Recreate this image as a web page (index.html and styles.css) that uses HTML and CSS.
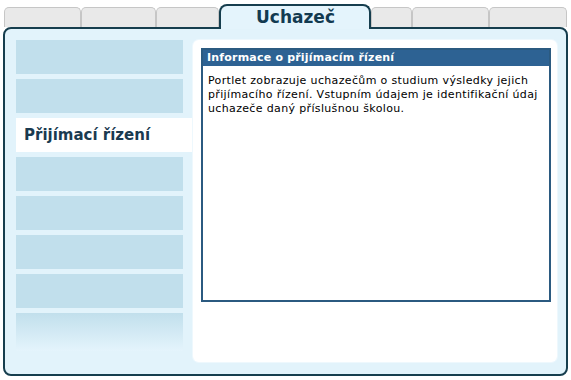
FILE: index.html
```html
<!DOCTYPE html>
<html lang="cs">
<head>
<meta charset="utf-8">
<title>Uchazeč</title>
<link rel="stylesheet" href="styles.css">
</head>
<body>
<div class="page">
  <div class="tabs">
    <div class="tab w1"></div>
    <div class="tab w2"></div>
    <div class="tab w3"></div>
    <div class="tab active">Uchazeč</div>
    <div class="tab w5"></div>
    <div class="tab w6"></div>
    <div class="tab w7"></div>
  </div>
  <div class="panel">
    <div class="menu">
      <div class="item"></div>
      <div class="item"></div>
      <div class="item current">Přijímací řízení</div>
      <div class="item"></div>
      <div class="item"></div>
      <div class="item"></div>
      <div class="item"></div>
      <div class="item last"></div>
    </div>
    <div class="content">
      <div class="portlet">
        <div class="portlet-head">Informace o přijímacím řízení</div>
        <div class="portlet-body">Portlet zobrazuje uchazečům o studium výsledky jejich přijímacího řízení. Vstupním údajem je identifikační údaj uchazeče daný příslušnou školou.</div>
      </div>
    </div>
  </div>
</div>
</body>
</html>
```
FILE: styles.css
```css
html, body {
  margin: 0;
  padding: 0;
  background: #ffffff;
}
body {
  font-family: "DejaVu Sans", Verdana, sans-serif;
}
.page {
  padding: 4px 0 0 3px;
  width: 571px;
  box-sizing: border-box;
}
.tabs {
  display: flex;
  align-items: flex-end;
  height: 23px;
  margin-left: 1px;
  position: relative;
  z-index: 2;
}
.tab {
  box-sizing: border-box;
  height: 20px;
  background: #e9e9e9;
  border: 1px solid #c6c6c6;
  border-bottom: none;
  border-radius: 5px 5px 0 0;
}
.w1 { width: 77px; }
.w2 { width: 75px; }
.w3 { width: 63px; }
.w5 { width: 41px; }
.w6 { width: 77px; }
.w7 { width: 78px; }
.tab.active {
  width: 152px;
  height: 25px;
  margin-bottom: -2px;
  background: #e4f4fc;
  border: 2px solid #163e4e;
  border-bottom: none;
  border-radius: 8px 8px 0 0;
  color: #123a50;
  font-weight: bold;
  font-size: 17px;
  line-height: 22px;
  text-align: center;
  padding-left: 1px;
}
.panel {
  box-sizing: border-box;
  width: 565px;
  height: 349px;
  border: 2px solid #163e4e;
  border-radius: 8px;
  background: #e2f3fb;
  display: flex;
  padding: 11px 9px 12px 11px;
}
.menu {
  width: 177px;
  display: flex;
  flex-direction: column;
  gap: 5px;
}
.item {
  width: 167px;
  height: 34px;
  background: #c1dfec;
}
.item.current {
  width: 177px;
  background: #ffffff;
  color: #1a3a50;
  font-weight: bold;
  font-size: 15px;
  line-height: 34px;
  padding-left: 8px;
  box-sizing: border-box;
}
.item.last {
  height: 38px;
  background: linear-gradient(#c1dfec, #e4f4fc);
}
.content {
  flex: 1;
  background: #ffffff;
  border-radius: 6px;
  padding: 8px 6px 0 8px;
  box-shadow: 0 0 0 1px #eef8fd;
}
.portlet {
  box-sizing: border-box;
  height: 254px;
  border: 2px solid #2b5a80;
  background: #ffffff;
}
.portlet-head {
  background: #2d6293;
  color: #ffffff;
  font-weight: bold;
  font-size: 11px;
  line-height: 16px;
  padding-left: 4px;
  letter-spacing: 0.2px;
}
.portlet-body {
  font-size: 11px;
  line-height: 14px;
  letter-spacing: 0.35px;
  color: #000000;
  padding: 8px 6px 0 5px;
}
```
